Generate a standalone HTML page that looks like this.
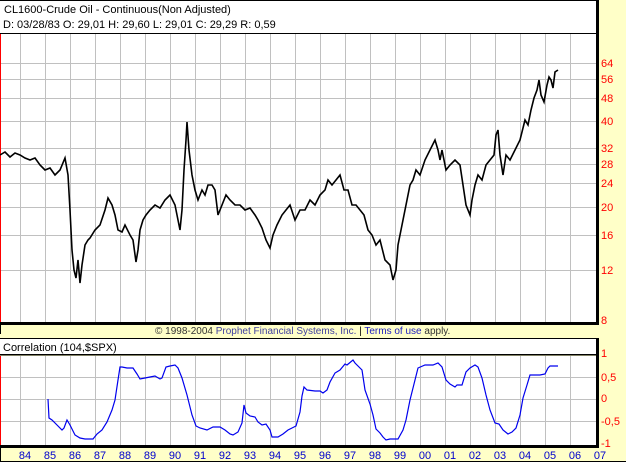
<!DOCTYPE html>
<html><head><meta charset="utf-8"><style>
html,body{margin:0;padding:0;background:#ffffc8;}
svg{display:block;font-family:"Liberation Sans",sans-serif;}
</style></head><body>
<svg width="626" height="462" xmlns="http://www.w3.org/2000/svg">
<rect width="626" height="462" fill="#ffffc8"/>
<rect x="0" y="0" width="597" height="34" fill="#fff"/>
<line x1="0" y1="0.5" x2="598" y2="0.5" stroke="#000"/>
<line x1="0" y1="33.5" x2="597" y2="33.5" stroke="#000"/>
<text x="4" y="13" font-size="11" fill="#000">CL1600-Crude Oil - Continuous(Non Adjusted)</text>
<text x="3" y="28" font-size="11" fill="#000">D: 03/28/83  O: 29,01  H: 29,60  L: 29,01  C: 29,29  R: 0,59</text>
<rect x="0" y="34" width="596" height="288" fill="#fff"/>
<g stroke="#c0c0c0" stroke-width="1">
<path d="M20.5 34V322M45.5 34V322M70.5 34V322M95.5 34V322M120.5 34V322M145.5 34V322M170.5 34V322M195.5 34V322M220.5 34V322M245.5 34V322M270.5 34V322M295.5 34V322M320.5 34V322M345.5 34V322M370.5 34V322M395.5 34V322M420.5 34V322M445.5 34V322M470.5 34V322M495.5 34V322M520.5 34V322M545.5 34V322M570.5 34V322"/>
<path d="M0 63.5H596M0 79.5H596M0 98.5H596M0 121.5H596M0 148.5H596M0 164.5H596M0 183.5H596M0 207.5H596M0 235.5H596M0 270.5H596"/>
</g>
<line x1="0.5" y1="34" x2="0.5" y2="322" stroke="#f00"/>
<polyline fill="none" stroke="#000" stroke-width="1.6" points="0,155 5,152 10,157 15,153 20,155 25,158 30,160 35,158 40,165 45,170 50,168 55,175 60,170 65,158 68,175 70,210 72,250 74,270 76,278 78,260 80,283 82,265 85,245 88,240 90,238 95,230 100,225 105,210 108,198 112,205 115,215 118,230 122,232 125,225 130,235 133,240 136,262 138,250 140,230 143,220 146,215 150,210 155,205 160,208 165,200 170,195 175,205 178,220 180,230 182,210 184,170 186,140 187,122 189,150 192,175 195,190 198,200 202,190 205,195 208,185 212,185 215,190 218,215 222,205 226,195 230,200 235,205 240,205 245,210 250,208 255,215 258,220 262,228 266,240 270,248 273,235 277,225 282,215 286,210 290,205 295,220 300,210 305,210 310,200 315,205 320,195 325,190 328,180 332,185 336,180 340,175 344,190 348,190 352,205 356,205 360,210 364,215 368,230 372,235 376,245 380,240 385,260 390,265 393,280 396,270 398,245 401,230 404,215 407,200 410,185 413,180 416,170 420,175 425,160 430,150 435,140 438,150 440,160 442,150 446,170 450,165 455,160 460,165 463,185 466,205 470,215 472,200 475,185 478,175 482,180 486,165 490,160 494,155 496,135 498,130 500,155 503,175 506,155 510,160 515,150 520,140 525,120 528,125 531,110 534,98 537,90 539,80 541,95 544,102 547,85 549,77 551,80 553,88 555,72 558,70"/>
<rect x="0" y="322" width="599" height="3" fill="#000"/>
<rect x="596" y="0" width="3" height="325" fill="#000"/>
<line x1="0.5" y1="325" x2="0.5" y2="334" stroke="#000"/>
<g font-size="11" fill="#f00">
<text x="601" y="67">64</text><text x="601" y="83">56</text><text x="601" y="102">48</text><text x="601" y="125">40</text><text x="601" y="152">32</text><text x="601" y="168">28</text><text x="601" y="187">24</text><text x="601" y="211">20</text><text x="601" y="239">16</text><text x="601" y="274">12</text><text x="601" y="324">8</text>
</g>
<text x="155" y="334" font-size="10"><tspan fill="#333">© 1998-2004 </tspan><tspan fill="#4040a0">Prophet Financial Systems, Inc.</tspan><tspan fill="#000"> | </tspan><tspan fill="#2020c0">Terms of use</tspan><tspan fill="#333"> apply.</tspan></text>
<rect x="0" y="338" width="597" height="17" fill="#fff"/>
<line x1="0" y1="338.5" x2="597" y2="338.5" stroke="#000"/>
<rect x="0" y="354" width="597" height="1.5" fill="#000"/>
<text x="3" y="351" font-size="11" fill="#000">Correlation (104,$SPX)</text>
<rect x="0" y="356" width="596" height="89" fill="#fff"/>
<g stroke="#c0c0c0" stroke-width="1">
<path d="M20.5 356V445M45.5 356V445M70.5 356V445M95.5 356V445M120.5 356V445M145.5 356V445M170.5 356V445M195.5 356V445M220.5 356V445M245.5 356V445M270.5 356V445M295.5 356V445M320.5 356V445M345.5 356V445M370.5 356V445M395.5 356V445M420.5 356V445M445.5 356V445M470.5 356V445M495.5 356V445M520.5 356V445M545.5 356V445M570.5 356V445"/>
<path d="M0 377.5H596M0 399.5H596M0 421.5H596"/>
</g>
<line x1="0.5" y1="356" x2="0.5" y2="445" stroke="#f00"/>
<polyline fill="none" stroke="#0000ee" stroke-width="1.2" points="48,399 49,418 52,420 57,425 62,430 64,428 67,420 70,425 75,435 80,438 85,439 93,439 97,434 102,430 107,422 112,410 115,400 118,380 120,367 122,367 127,368 133,368 137,374 140,379 145,378 150,377 155,376 160,379 162,378 166,367 170,366 175,365 178,368 182,378 187,395 192,415 196,426 200,428 207,430 213,427 220,427 225,430 230,434 233,435 238,432 242,423 244,405 246,413 250,416 255,417 258,422 262,425 266,424 270,430 272,437 278,437 283,434 288,430 292,428 296,426 300,412 302,396 304,387 307,390 315,391 320,391 323,393 327,390 330,382 335,373 340,370 345,364 347,365 353,360 355,363 362,370 365,390 370,404 373,415 376,429 380,433 383,437 386,440 390,439 398,439 403,430 406,420 410,400 414,384 418,368 425,365 433,365 438,363 442,367 446,380 450,384 455,387 457,385 462,385 466,372 470,368 475,365 478,367 482,378 486,395 490,410 495,423 499,424 503,430 508,434 512,432 516,428 520,415 523,398 527,385 530,375 535,375 540,375 545,374 548,368 550,366 558,366"/>
<rect x="0" y="445" width="599" height="3" fill="#000"/>
<rect x="596" y="338" width="3" height="110" fill="#000"/>
<line x1="0.5" y1="448" x2="0.5" y2="462" stroke="#000"/>
<line x1="0" y1="461.5" x2="626" y2="461.5" stroke="#000"/>
<g font-size="11" fill="#f00">
<text x="601" y="357">1</text><text x="601" y="381">0,5</text><text x="601" y="402">0</text><text x="601" y="425">-0,5</text><text x="601" y="447">-1</text>
</g>
<g font-size="11" fill="#0000cc" text-anchor="middle">
<text x="25" y="459">84</text><text x="50" y="459">85</text><text x="75" y="459">86</text><text x="100" y="459">87</text><text x="125" y="459">88</text><text x="150" y="459">89</text><text x="175" y="459">90</text><text x="200" y="459">91</text><text x="225" y="459">92</text><text x="250" y="459">93</text><text x="275" y="459">94</text><text x="300" y="459">95</text><text x="325" y="459">96</text><text x="350" y="459">97</text><text x="375" y="459">98</text><text x="400" y="459">99</text><text x="425" y="459">00</text><text x="450" y="459">01</text><text x="475" y="459">02</text><text x="500" y="459">03</text><text x="525" y="459">04</text><text x="550" y="459">05</text><text x="575" y="459">06</text><text x="600" y="459">07</text>
</g>
</svg>
</body></html>
